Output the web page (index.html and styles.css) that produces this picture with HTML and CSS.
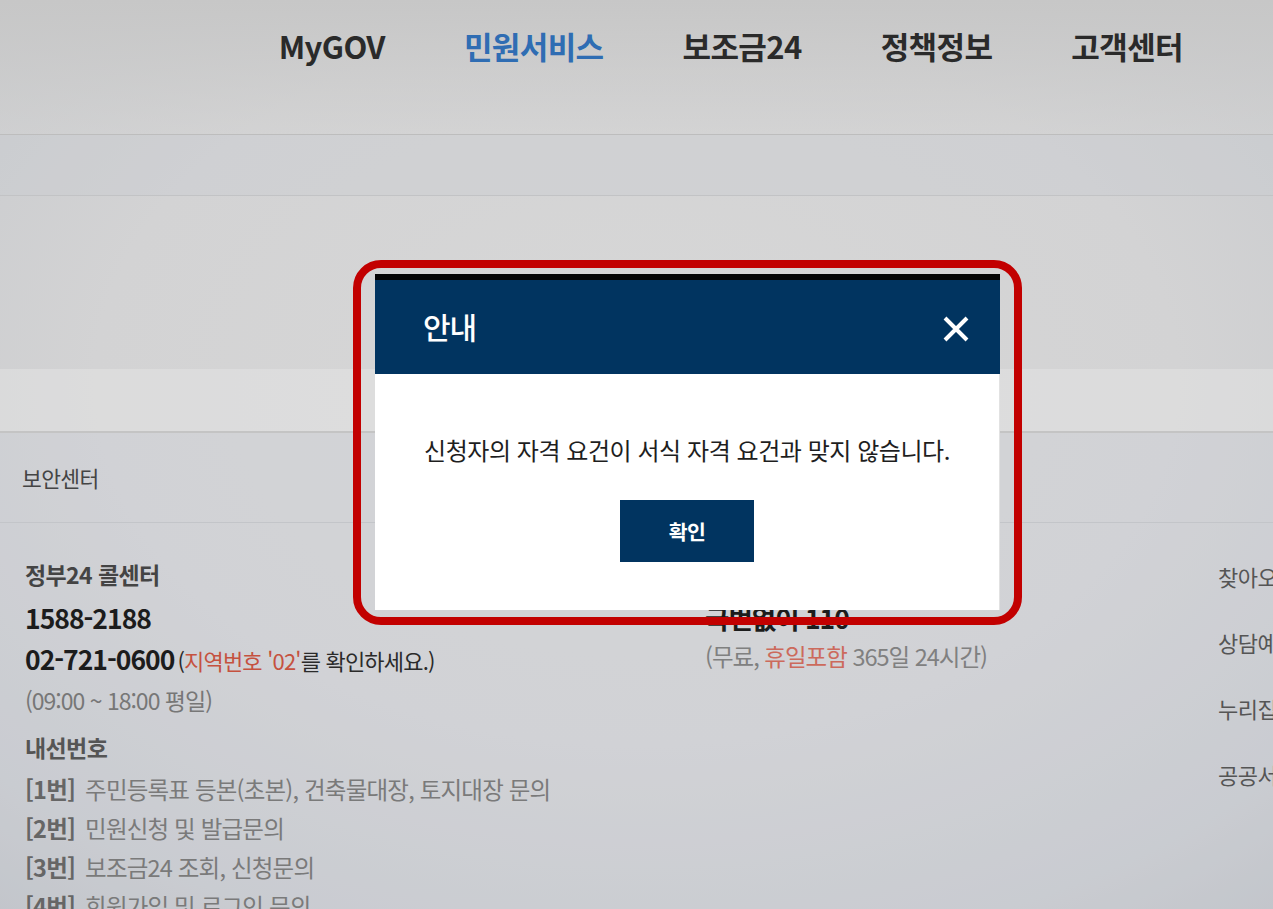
FILE: index.html
```html
<!DOCTYPE html>
<html lang="ko">
<head>
<meta charset="utf-8">
<title>정부24 - 안내</title>
<link rel="stylesheet" href="styles.css">
</head>
<body>
<div class="page">
  <header class="gnb">
    <nav class="gnb-menu">
      <a class="gnb-item">MyGOV</a>
      <a class="gnb-item active">민원서비스</a>
      <a class="gnb-item">보조금24</a>
      <a class="gnb-item">정책정보</a>
      <a class="gnb-item">고객센터</a>
    </nav>
  </header>
  <div class="subbar"></div>
  <div class="visual"></div>
  <div class="tabbar"></div>
  <footer class="footer">
    <div class="footer-top"><span class="footer-link">보안센터</span></div>
    <div class="footer-cols">
      <div class="col col-left">
        <p class="f-title">정부24 콜센터</p>
        <p class="f-num">1588-2188</p>
        <p class="f-num f-num2">02-721-0600<span class="f-note">(<span class="red">지역번호 '02'</span>를 확인하세요.)</span></p>
        <p class="f-time">(09:00 ~ 18:00 평일)</p>
        <p class="f-title f-sub">내선번호</p>
        <ul class="ext-list">
          <li><b>[1번]</b>주민등록표 등본(초본), 건축물대장, 토지대장 문의</li>
          <li><b>[2번]</b>민원신청 및 발급문의</li>
          <li><b>[3번]</b>보조금24 조회, 신청문의</li>
          <li><b>[4번]</b>회원가입 및 로그인 문의</li>
        </ul>
      </div>
      <div class="col col-mid">
        <p class="f-title">정부민원안내콜센터</p>
        <p class="f-num">국번없이 110</p>
        <p class="f-time">(무료, <span class="red">휴일포함</span> 365일 24시간)</p>
      </div>
      <div class="col col-right">
        <p class="r-link">찾아오시는 길</p>
        <p class="r-link">상담예약 안내</p>
        <p class="r-link">누리집 이용안내</p>
        <p class="r-link">공공서비스 안내</p>
      </div>
    </div>
  </footer>
</div>

<div class="modal" role="dialog">
  <div class="modal-head">
    <h2 class="modal-title">안내</h2>
    <span class="modal-close" aria-label="닫기">
      <svg width="28" height="26" viewBox="0 0 28 26"><path d="M3 2 L25 24 M25 2 L3 24" stroke="#fff" stroke-width="4" stroke-linecap="butt" fill="none"/></svg>
    </span>
  </div>
  <div class="modal-body">
    <p class="modal-msg">신청자의 자격 요건이 서식 자격 요건과 맞지 않습니다.</p>
    <button class="modal-btn">확인</button>
  </div>
</div>
<div class="annot"></div>
</body>
</html>
```
FILE: styles.css
```css
* { box-sizing: border-box; }
html, body { margin: 0; padding: 0; }
body {
  width: 1273px;
  height: 909px;
  overflow: hidden;
  position: relative;
  font-family: "Noto Sans CJK KR", "Noto Sans", sans-serif;
  background: radial-gradient(ellipse 85% 80% at 50% 42%, #d7d7d7 0%, #d3d3d4 50%, #c8cacd 80%, #babdc1 100%);
  color: #333;
}
p { margin: 0; }
ul { margin: 0; padding: 0; list-style: none; }

.gnb {
  height: 135px;
  border-bottom: 1px solid #bdbdbd;
  background: linear-gradient(#c7c7c7, rgba(210,210,210,0.4));
}
.gnb-menu {
  display: flex;
  justify-content: flex-end;
  gap: 79px;
  padding: 24px 90px 0 0;
}
.gnb-item {
  font-size: 31px;
  font-weight: 700;
  line-height: 44px;
  color: #2a2a2a;
  letter-spacing: -0.6px;
}
.gnb-item.active { color: #2f6db3; }

.subbar {
  height: 61px;
  border-bottom: 1px solid #c2c3c5;
  background: rgba(200,203,208,0.35);
}
.visual {
  height: 173px;
}
.tabbar {
  height: 64px;
  background: rgba(230,230,230,0.45);
  border-bottom: 2px solid #c4c4c4;
}
.footer {
  background: rgba(206,210,218,0.3);
  height: 476px;
}
.footer-top {
  height: 90px;
  border-bottom: 1px solid #c3c5c9;
  display: flex;
  align-items: center;
  padding-left: 22px;
}
.footer-link {
  font-size: 21.5px;
  color: #444;
  letter-spacing: -0.6px;
}
.footer-cols {
  display: grid;
  grid-template-columns: 680px 513px 1fr;
  padding-left: 25px;
}
.col-left, .col-mid { padding-top: 31px; }
.f-title {
  font-size: 23px;
  font-weight: 700;
  line-height: 40px;
  color: #444;
  letter-spacing: -0.6px;
}
.f-num {
  margin-top: 4px;
  font-size: 26.5px;
  font-weight: 700;
  line-height: 40px;
  color: #1c1c1c;
  letter-spacing: -1px;
}
.f-num2 { margin-top: 1px; }
.f-note {
  margin-left: 3px;
  font-size: 22px;
  font-weight: 400;
  color: #2a2a2a;
  letter-spacing: -0.8px;
}
.red { color: #c5513f; }
.f-time {
  font-size: 23px;
  line-height: 40px;
  color: #777;
  letter-spacing: -1px;
}
.f-sub { margin-top: 7px; color: #555; }
.ext-list { margin-top: 3px; }
.ext-list li {
  font-size: 23.5px;
  line-height: 39px;
  color: #7a7a7a;
  letter-spacing: -0.8px;
  white-space: nowrap;
}
.ext-list b { color: #666; font-weight: 700; margin-right: 10px; }
.col-mid .f-time { margin-top: -2px; color: #808080; font-size: 23.5px; }
.col-mid .f-time .red { color: #cc6a5c; }
.col-right { padding-top: 20px; }
.r-link {
  font-size: 22px;
  line-height: 66px;
  color: #555;
  white-space: nowrap;
  letter-spacing: -0.5px;
}

/* modal */
.modal {
  position: absolute;
  left: 375px;
  top: 274px;
  width: 625px;
  border-top: 6px solid #050505;
  background: #fff;
  z-index: 10;
}
.modal-head {
  height: 94px;
  background: #013460;
  display: flex;
  align-items: center;
  justify-content: space-between;
  padding: 0 30px 0 48px;
}
.modal-title {
  margin: 0;
  font-size: 30px;
  font-weight: 500;
  color: #fff;
  letter-spacing: -1px;
  padding-bottom: 2px;
}
.modal-close { display: flex; padding-top: 4px; }
.modal-body {
  height: 236px;
  padding-top: 60px;
  display: flex;
  flex-direction: column;
  align-items: center;
  border-right: 1px solid #e2e2e2;
}
.modal-msg {
  font-size: 24px;
  line-height: 32px;
  color: #1e1e1e;
  letter-spacing: -0.45px;
  white-space: nowrap;
}
.modal-btn {
  margin-top: 34px;
  width: 134px;
  height: 62px;
  border: 0;
  background: #013460;
  color: #fff;
  font-family: inherit;
  font-size: 20.5px;
  font-weight: 700;
  letter-spacing: -0.5px;
}
.annot {
  position: absolute;
  left: 353px;
  top: 260px;
  width: 669px;
  height: 365px;
  border: 8px solid #c20000;
  border-radius: 28px;
  z-index: 20;
  pointer-events: none;
}
```
